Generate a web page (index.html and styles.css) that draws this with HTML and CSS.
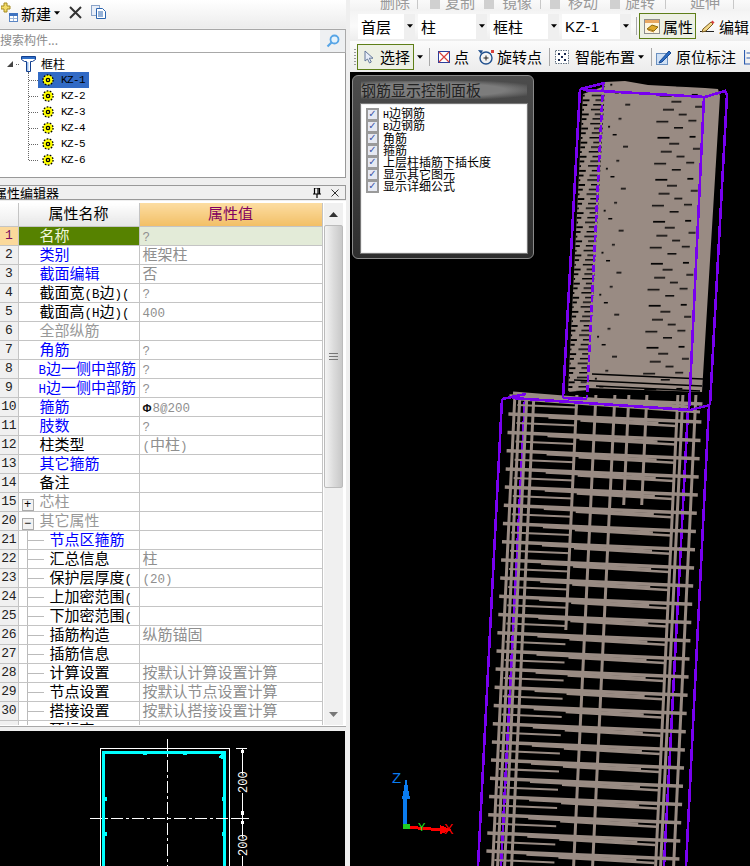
FILE: index.html
```html
<!DOCTYPE html>
<html lang="zh">
<head>
<meta charset="utf-8">
<title>钢筋显示</title>
<link rel="stylesheet" href="styles.css">
</head>
<body>
<svg class="defs" width="0" height="0">
  <symbol id="gear" viewBox="0 0 13 13">
    <g stroke="#000" stroke-width="1.4" stroke-dasharray="1.800 1.600"><circle cx="6.500" cy="6.500" r="5.500" fill="#ffff00"/></g>
    <circle cx="6.500" cy="6.500" r="1.800" fill="#ffff00" stroke="#000" stroke-width="1.400"/>
  </symbol>
  <symbol id="caret" viewBox="0 0 7 4"><path d="M0 0h7L3.500 4z" fill="#000"/></symbol>
</svg>

<aside class="left">
  <div class="tb">
    <svg class="ic-new" width="17" height="21" viewBox="0 0 17 21">
      <path d="M3 1h3v3h3v3H6v3H3V7H0V4h3z" fill="#f3dc6a" stroke="#a58a20"/>
      <rect x="8.500" y="11.500" width="8" height="8" fill="#fff" stroke="#5c86c4"/>
      <rect x="8" y="11" width="9" height="3" fill="#3f73c0"/>
      <path d="M9 16.500h7M12.500 14v5" stroke="#9db6d8"/>
    </svg>
    <span class="tb-label">新建</span>
    <svg class="caret" width="6" height="4"><use href="#caret"/></svg>
    <svg class="ic-x" width="13" height="13" viewBox="0 0 13 13"><path d="M1 1l11 11M12 1L1 12" stroke="#333" stroke-width="2"/></svg>
    <svg class="ic-copy" width="15" height="14" viewBox="0 0 15 14">
      <rect x=".5" y=".5" width="8" height="10" fill="#e8eef8" stroke="#8aa3c8"/>
      <path d="M5.500 3.500h6l3 3v7h-9z" fill="#fff" stroke="#2c65b0"/>
      <path d="M7 7h5M7 9h5M7 11h5" stroke="#2c65b0"/>
    </svg>
  </div>

  <div class="search">
    <div class="search-box">搜索构件...</div>
    <svg class="ic-search" width="14" height="14" viewBox="0 0 14 14">
      <circle cx="8.500" cy="5.500" r="4" fill="#e6f3fc" stroke="#57a5e6" stroke-width="1.800"/>
      <path d="M5.500 8.500L1.500 12.500" stroke="#57a5e6" stroke-width="2.200"/>
    </svg>
  </div>

  <div class="tree">
    <div class="tree-root">
      <svg class="root-arrow" width="6" height="6"><path d="M6 0v6H0z" fill="#444"/></svg>
      <span class="root-dash"></span>
      <svg class="root-ic" width="15" height="16" viewBox="0 0 15 16">
        <path d="M.5.500h14v3l-3 2h-2v10h-4v-10h-2l-3-2z" fill="#fff" stroke="#123f8f"/>
        <path d="M1 1h13v2H1z" fill="#2f6fc8"/>
        <path d="M6 6h1.500v9H6z" fill="#9cc0ee"/>
      </svg>
      <span class="root-label">框柱</span>
    </div>
    <div class="tree-kids">
      <div class="kid"><span class="kid-dash"></span><div class="kid-body kid-sel"><svg class="gear" width="12" height="12"><use href="#gear"/></svg><span class="kz">KZ-1</span></div></div>
      <div class="kid"><span class="kid-dash"></span><div class="kid-body"><svg class="gear" width="12" height="12"><use href="#gear"/></svg><span class="kz">KZ-2</span></div></div>
      <div class="kid"><span class="kid-dash"></span><div class="kid-body"><svg class="gear" width="12" height="12"><use href="#gear"/></svg><span class="kz">KZ-3</span></div></div>
      <div class="kid"><span class="kid-dash"></span><div class="kid-body"><svg class="gear" width="12" height="12"><use href="#gear"/></svg><span class="kz">KZ-4</span></div></div>
      <div class="kid"><span class="kid-dash"></span><div class="kid-body"><svg class="gear" width="12" height="12"><use href="#gear"/></svg><span class="kz">KZ-5</span></div></div>
      <div class="kid kid-last"><span class="kid-dash"></span><div class="kid-body"><svg class="gear" width="12" height="12"><use href="#gear"/></svg><span class="kz">KZ-6</span></div></div>
    </div>
  </div>

  <div class="title">
    <span class="title-text">属性编辑器</span>
    <svg width="8" height="10" viewBox="0 0 8 10"><path d="M1.500 0h5v6h-5zM0 6h8M4 6v4M5 0v6" fill="none" stroke="#000" stroke-width="1.200"/></svg>
    <svg class="title-x" width="8" height="8" viewBox="0 0 8 8"><path d="M.5.500l7 7M7.500.500l-7 7" stroke="#333"/></svg>
  </div>

  <div class="props">
    <div class="table-wrap">
      <table class="grid">
        <colgroup><col class="c0"><col class="c1"><col class="c2"></colgroup>
        <thead><tr><th class="th-num"></th><th class="th-name">属性名称</th><th class="th-val">属性值</th></tr></thead>
        <tbody>
          <tr><td class="num num-on">1</td><td class="name name-on">名称</td><td class="val val-on"><span class="m">?</span></td></tr>
          <tr><td class="num">2</td><td class="name b">类别</td><td class="val">框架柱</td></tr>
          <tr><td class="num">3</td><td class="name b">截面编辑</td><td class="val">否</td></tr>
          <tr><td class="num">4</td><td class="name">截面宽<span class="m">(B</span>边<span class="m">)(</span></td><td class="val"><span class="m">?</span></td></tr>
          <tr><td class="num">5</td><td class="name">截面高<span class="m">(H</span>边<span class="m">)(</span></td><td class="val"><span class="m">400</span></td></tr>
          <tr><td class="num">6</td><td class="name g">全部纵筋</td><td class="val"></td></tr>
          <tr><td class="num">7</td><td class="name b">角筋</td><td class="val"><span class="m">?</span></td></tr>
          <tr><td class="num">8</td><td class="name b tight"><span class="m">B</span>边一侧中部筋</td><td class="val"><span class="m">?</span></td></tr>
          <tr><td class="num">9</td><td class="name b tight"><span class="m">H</span>边一侧中部筋</td><td class="val"><span class="m">?</span></td></tr>
          <tr><td class="num">10</td><td class="name b">箍筋</td><td class="val"><span class="rebar">Φ</span><span class="m">8@200</span></td></tr>
          <tr><td class="num">11</td><td class="name b">肢数</td><td class="val"><span class="m">?</span></td></tr>
          <tr><td class="num">12</td><td class="name">柱类型</td><td class="val"><span class="m">(</span>中柱<span class="m">)</span></td></tr>
          <tr><td class="num">13</td><td class="name b">其它箍筋</td><td class="val"></td></tr>
          <tr><td class="num">14</td><td class="name">备注</td><td class="val"></td></tr>
          <tr><td class="num">15</td><td class="name g"><span class="exp">+</span>芯柱</td><td class="val"></td></tr>
          <tr><td class="num">20</td><td class="name g"><span class="exp">−</span>其它属性</td><td class="val"></td></tr>
          <tr><td class="num">21</td><td class="name child b">节点区箍筋</td><td class="val"></td></tr>
          <tr><td class="num">22</td><td class="name child">汇总信息</td><td class="val">柱</td></tr>
          <tr><td class="num">23</td><td class="name child">保护层厚度<span class="m">(</span></td><td class="val"><span class="m">(20)</span></td></tr>
          <tr><td class="num">24</td><td class="name child">上加密范围<span class="m">(</span></td><td class="val"></td></tr>
          <tr><td class="num">25</td><td class="name child">下加密范围<span class="m">(</span></td><td class="val"></td></tr>
          <tr><td class="num">26</td><td class="name child">插筋构造</td><td class="val">纵筋锚固</td></tr>
          <tr><td class="num">27</td><td class="name child">插筋信息</td><td class="val"></td></tr>
          <tr><td class="num">28</td><td class="name child">计算设置</td><td class="val">按默认计算设置计算</td></tr>
          <tr><td class="num">29</td><td class="name child">节点设置</td><td class="val">按默认节点设置计算</td></tr>
          <tr><td class="num">30</td><td class="name child">搭接设置</td><td class="val">按默认搭接设置计算</td></tr>
          <tr><td class="num"></td><td class="name child">顶标高<span class="m">(m)</span></td><td class="val"><span class="m">?</span></td></tr>
        </tbody>
      </table>
    </div>
    <div class="scroll">
      <div class="sc-btn"><svg width="9" height="5"><path d="M4.500 0L9 5H0z" fill="#333"/></svg></div>
      <div class="sc-thumb"><span class="grip"></span></div>
      <div class="sc-track"></div>
      <div class="sc-btn sc-down"><svg width="9" height="5"><path d="M0 0h9L4.500 5z" fill="#777"/></svg></div>
    </div>
  </div>

  <div class="section">
    <svg class="section-svg" width="345" height="135" viewBox="0 731 345 135" shape-rendering="crispEdges">
      <path d="M100.500 866V748.500h129V866" fill="none" stroke="#fff"/>
      <path d="M103.500 866V752h121v114" fill="none" stroke="#00ffff" stroke-width="3"/>
      <path d="M167.500 739V866M90 818.500H249" stroke="#fff" stroke-dasharray="12 3 3 3" fill="none"/>
      <path d="M242.500 748V866M236 748.500h11M233 818.500h16" stroke="#fff" fill="none"/>
      <path d="M241 750h3v3h-3zM241 811h3v4h-3zM241 821h3v3h-3z" fill="#fff"/>
      <path d="M143 752h3v2h-3zM183 752h3v2h-3zM104 797h2v3h-2zM222 797h2v3h-2zM104 832h2v3h-2zM222 832h2v3h-2z" fill="#00ffff" stroke="#00ffff"/>
      <path d="M219 758l5-5M221 759l4-4" stroke="#00ffff" stroke-width="1.500"/>
      <rect x="236" y="774" width="13" height="19" fill="#000"/>
      <rect x="236" y="837" width="13" height="19" fill="#000"/>
      <text class="dim" transform="translate(247 793) rotate(-90)">200</text>
      <text class="dim" transform="translate(247 856) rotate(-90)">200</text>
    </svg>
  </div>
</aside>

<main class="right">
  <div class="strip">
    <span class="strip-item i1">删除</span><span class="vsep s1"></span>
    <span class="strip-ic i2"></span><span class="strip-item i3">复制</span>
    <span class="strip-ic i4"></span><span class="strip-item i5">镜像</span><span class="vsep s2"></span>
    <span class="strip-ic i6"></span><span class="strip-item i7">移动</span>
    <span class="strip-ic i8"></span><span class="strip-item i9">旋转</span><span class="vsep s3"></span>
    <span class="strip-item i10">延伸</span><span class="vsep s4"></span>
    <span class="strip-item i11">修</span>
  </div>

  <div class="bar bar-2">
    <div class="sel sel-first"><span class="sel-text">首层</span><span class="sel-btn"><svg width="6" height="4"><use href="#caret"/></svg></span></div>
    <div class="sel"><span class="sel-text">柱</span><span class="sel-btn"><svg width="6" height="4"><use href="#caret"/></svg></span></div>
    <div class="sel"><span class="sel-text">框柱</span><span class="sel-btn"><svg width="6" height="4"><use href="#caret"/></svg></span></div>
    <div class="sel"><span class="sel-text sel-kz">KZ-1</span><span class="sel-btn"><svg width="6" height="4"><use href="#caret"/></svg></span></div>
    <span class="bsep"></span>
    <div class="toggle toggle-prop">
      <svg width="16" height="15" viewBox="0 0 16 15">
        <rect x=".5" y=".5" width="15" height="14" fill="#fff6de" stroke="#8d8d8d"/>
        <rect x="1" y="1" width="14" height="3" fill="#e9a862"/>
        <path d="M3 10l5-4 6 2-4 4z" fill="#e0a92a" stroke="#8a6a10"/>
        <path d="M4 11l6 2" stroke="#c0862a"/>
      </svg>
      <span>属性</span>
    </div>
    <svg class="ic-edit" width="16" height="14" viewBox="0 0 16 14">
      <path d="M1 12.500h14" stroke="#222"/>
      <path d="M4 10l8-7 2 2-7 7-4 1z" fill="#f2d98c" stroke="#7a5a20"/>
      <path d="M12 3l1.500-1.500 2 2L14 5z" fill="#d94040"/>
    </svg>
    <span class="bar-text">编辑</span>
  </div>

  <div class="bar bar-3">
    <span class="handle"></span>
    <div class="toggle toggle-sel">
      <svg width="10" height="14" viewBox="0 0 10 14"><path d="M1 1v10l2.500-2 2 4 1.800-1-2-3.800H9z" fill="#e8eef8" stroke="#64789a"/></svg>
      <span>选择</span>
    </div>
    <svg class="c-sel" width="6" height="4"><use href="#caret"/></svg>
    <span class="bsep bs-a"></span>
    <svg class="ic-point" width="12" height="12" viewBox="0 0 12 12"><rect x=".5" y=".5" width="11" height="11" fill="#fff" stroke="#2b3e9c"/><path d="M1 1l10 10M11 1L1 11" stroke="#d8403c" stroke-width="1.200"/></svg>
    <span class="bar-text t-point">点</span>
    <svg class="ic-rot" width="16" height="16" viewBox="0 0 16 16"><circle cx="8" cy="9" r="6" fill="none" stroke="#20508e" stroke-width="1.400"/><path d="M5.500 9h5M8 6.500v5" stroke="#222"/><path d="M0 1l5 .5-2 3.500z" fill="#20508e"/><rect x="13" y="1" width="3" height="3" fill="#d8403c"/></svg>
    <span class="bar-text t-rot">旋转点</span>
    <span class="bsep bs-b"></span>
    <svg class="ic-smart" width="14" height="14" viewBox="0 0 14 14"><rect x=".5" y=".5" width="13" height="13" fill="#fff" stroke="#607080" stroke-dasharray="1.500 1"/><path d="M3 3h2v2H3zM9 3h2v2H9zM3 9h2v2H3zM9 9h2v2H9zM6 6h2v2H6z" fill="#1a2a50"/></svg>
    <span class="bar-text t-smart">智能布置</span>
    <svg class="c-smart" width="6" height="4"><use href="#caret"/></svg>
    <span class="bsep bs-c"></span>
    <svg class="ic-mark" width="16" height="16" viewBox="0 0 16 16"><rect x=".5" y="4.500" width="11" height="11" fill="#cfe0f4" stroke="#6a90c0"/><path d="M4 12L13 2l2 2-9 9-3 1z" fill="#2c6cc4" stroke="#1a4a90"/></svg>
    <span class="bar-text t-mark">原位标注</span>
    <svg class="ic-last" width="6" height="16" viewBox="0 0 6 16"><path d="M.5 1v14H6M2.500 4H6M2.500 9H6" fill="none" stroke="#2c5cb0" stroke-width="1.200"/></svg>
  </div>

  <div class="canvas">
    <svg class="scene" width="400" height="794" viewBox="350 72 400 794">
      <defs>
        <pattern id="dashes" patternUnits="userSpaceOnUse" width="110" height="42" patternTransform="translate(600 90) skewX(-3)">
          <path d="M15 2h4v1.500h-4zM26 14h5v1.500h-5zM20 28h3v1.500h-3zM10 36h2v1.500h-2zM60 5h12v1.500H60zM72 11h10v1.500H72zM64 19h11v1.500H64zM80 24h8v1.500h-8zM58 31h12v1.500H58zM76 37h9v1.500h-9zM92 4h6v1.500h-6zM96 16h7v1.500h-7zM90 30h8v1.500h-8z" fill="#000"/>
        </pattern>
        <pattern id="stubs" patternUnits="userSpaceOnUse" width="22" height="14.100" patternTransform="translate(582 90) skewX(-3)">
          <path d="M0 0h6v1.800H0zM0 4.700h3v1.800H0zM0 9.400h8v1.800H0zM12 0h8v1.500h-8zM10 4.700h10v1.500H10zM14 9.400h6v1.500h-6z" fill="#000"/>
        </pattern>
        <g id="rb" class="rb">
          <path d="M0 0L193 8" stroke-width="3.500"/>
          <path d="M40 3.500L150 9" stroke-width="2.500"/>
          <path d="M72 6.500L168 12" stroke-width="2.500"/>
          <path d="M8 9L68 11.500" stroke-width="2"/>
        </g>
      </defs>

      <g class="pur" shape-rendering="crispEdges">
        <path d="M525 398L501 866M688 410L664 866"/>
      </g>

      <g class="rv">
        <path d="M514.900 395L492.600 866M519.900 395L497.600 866M526.900 395L504.600 866M533.900 395L511.600 866"/>
        <path d="M576.900 395L565.800 630M595.900 395L573.600 866M614.900 395L592.600 866M628.900 395L623.700 505M646.900 395L641.700 505"/>
        <path d="M677.900 395L655.600 866M682.900 395L660.600 866M695.900 395L673.600 866"/>
      </g>
      <path class="rtop" d="M513 393L690 407M520 399L700 412"/>
      <use href="#rb" x="509.400" y="396"/><use href="#rb" x="508.400" y="414"/><use href="#rb" x="507.500" y="432.500"/>
      <use href="#rb" x="506.600" y="450.700"/><use href="#rb" x="505.700" y="469"/><use href="#rb" x="504.800" y="487"/>
      <use href="#rb" x="503.800" y="505.300"/><use href="#rb" x="502.900" y="523.500"/><use href="#rb" x="502" y="541.700"/>
      <use href="#rb" x="501.100" y="560"/><use href="#rb" x="500.200" y="578"/><use href="#rb" x="499.200" y="596.300"/>
      <use href="#rb" x="498.300" y="614.500"/><use href="#rb" x="497.400" y="632.700"/><use href="#rb" x="496.500" y="651"/>
      <use href="#rb" x="495.600" y="669"/><use href="#rb" x="494.600" y="687.300"/><use href="#rb" x="493.700" y="705.500"/>
      <use href="#rb" x="492.800" y="723.700"/><use href="#rb" x="491.900" y="742"/><use href="#rb" x="491" y="760"/>
      <use href="#rb" x="490" y="778.300"/><use href="#rb" x="489.100" y="796.500"/><use href="#rb" x="488.200" y="814.700"/>
      <use href="#rb" x="487.300" y="833"/><use href="#rb" x="486.400" y="851"/><use href="#rb" x="485.400" y="869.300"/>

      <path class="concrete" d="M605 82L625 81L648 85L705 88L718 89L720 96L702 392L586 388L603 90z"/>
      <path class="concrete" d="M583 94L605 86L588 390L568 392z"/>
      <path d="M605 82L625 81L648 85L705 88L718 89L720 96L702 392L586 388L603 90z" fill="url(#dashes)"/>
      <path d="M583 94L605 86L588 390L568 392z" fill="url(#stubs)"/>
      <path class="gaps" d="M592 374L703 379M574 380L702 386M596 386L700 391"/>

      <g class="pur" shape-rendering="crispEdges">
        <path d="M502 399L478 866M709 405L686 866"/>
        <path d="M502 399L526 394M512 398L690 410L710 405"/>
        <path d="M580 89L563 398M727 95L710 405"/>
        <path d="M580 89L605 83M583 90L705 97L725 91L727 95"/>
        <path class="pur-dash" d="M603 85L587 398"/>
        <path d="M704 97L689 410"/>
        <path d="M563 398L587 399"/>
      </g>

      <g shape-rendering="crispEdges">
        <path d="M405 827V797" stroke="#0a7cf0" stroke-width="3.500" fill="none"/>
        <path d="M406 777L410 799H402z" fill="#0a7cf0"/>
        <path d="M404 827L445 830" stroke="#ff0000" stroke-width="3" fill="none"/>
        <path d="M440 825L452 830L440 834z" fill="#ff0000"/>
        <path d="M403 824h7v5h-7z" fill="#22cc22"/>
      </g>
      <text class="ax ax-z" x="392" y="783">Z</text>
      <text class="ax ax-y" x="418" y="831">Y</text>
      <text class="ax ax-x" x="444" y="834">X</text>
    </svg>

    <section class="panel">
      <h2 class="panel-title">钢筋显示控制面板</h2>
      <ul class="panel-list">
        <li class="chk"><span class="box">✓</span><span class="lab"><span class="lm">H</span>边钢筋</span></li>
        <li class="chk"><span class="box">✓</span><span class="lab"><span class="lm">B</span>边钢筋</span></li>
        <li class="chk"><span class="box">✓</span><span class="lab">角筋</span></li>
        <li class="chk"><span class="box">✓</span><span class="lab">箍筋</span></li>
        <li class="chk"><span class="box">✓</span><span class="lab">上层柱插筋下插长度</span></li>
        <li class="chk"><span class="box">✓</span><span class="lab">显示其它图元</span></li>
        <li class="chk"><span class="box">✓</span><span class="lab">显示详细公式</span></li>
      </ul>
    </section>
  </div>
</main>
</body>
</html>
```

FILE: styles.css
```css
* { box-sizing: border-box; }
html, body { margin: 0; padding: 0; }
body {
  width: 750px; height: 866px; overflow: hidden;
  display: flex; gap: 4px;
  background: #efefef;
  font: 15px/1 "Noto Sans CJK SC", "Liberation Sans", sans-serif;
  color: #000;
}
svg { display: block; flex: none; }
.defs { position: absolute; }

/* left */
.left { width: 346px; height: 866px; display: flex; flex-direction: column; }
.tb {
  height: 28px; display: flex; align-items: center; padding-left: 1px; flex: none;
  background: linear-gradient(#ffffff, #ececec);
}
.ic-new { margin-top: -4px; }
.tb-label { margin-left: 3px; margin-top: -2px; }
.tb .caret { margin-left: 3px; margin-top: -2px; }
.ic-x { margin-left: 9px; margin-top: -4px; }
.ic-copy { margin-left: 9px; margin-top: -4px; }

.search {
  height: 24px; margin-top: 1px; flex: none;
  display: flex; align-items: center;
  background: #eef0f2; border-top: 1px solid #a8a8a8; border-bottom: 1px solid #a8a8a8; border-right: 1px solid #aaa;
}
.search-box {
  width: 320px; height: 100%; padding-bottom: 3px; background: #fff; color: #8c8c8c;
  display: flex; align-items: center; font-size: 12px;
}
.ic-search { margin-left: 6px; }

.tree {
  height: 125px; flex: none; background: #fff;
  border-right: 1px solid #999; border-bottom: 1px solid #999;
}
.tree-root { height: 19px; padding: 3px 0 0 7px; display: flex; align-items: center; }
.root-dash { width: 3px; height: 0; margin: 0 2px 0 3px; border-bottom: 1px dotted #666; }
.root-ic { margin-top: -1px; }
.root-label { margin-left: 5px; font-size: 12px; }
.tree-kids {
  margin-left: 28px; height: 88px; border-left: 1px dotted #666;
}
.kid { height: 16px; display: flex; align-items: center; }
.kid-dash { width: 9px; border-bottom: 1px dotted #666; flex: none; }
.kid-body { width: 51px; height: 16px; display: flex; align-items: center; padding-left: 4px; }
.kid-sel { background: #316ac5; }
.kz { margin-left: 7px; font: 11px/1 "Liberation Mono", monospace; letter-spacing: -.6px; }

.title {
  height: 15px; margin-top: 7px; flex: none;
  display: flex; align-items: center;
  background: #f0f0f0; border: 1px solid #999; border-left: 0; padding-right: 6px; overflow: hidden;
}
.title-text { margin-left: -6px; flex: 1; white-space: nowrap; font-size: 13px; }
.title-x { margin-left: 10px; }

.props {
  height: 526px; margin-top: 1px; flex: none; display: flex;
  background: #fff; border-bottom: 1px solid #a8a8a8; padding-top: 2px;
}
.table-wrap { width: 323px; height: 522px; overflow: hidden; flex: none; }
.grid { width: 322px; table-layout: fixed; border-collapse: collapse; }
.c0 { width: 18px; } .c1 { width: 121px; } .c2 { width: 183px; }
.grid th, .grid td {
  border: 1px solid #c4c4c4; padding: 0; height: 19px; line-height: 16px;
  vertical-align: top; white-space: nowrap; overflow: hidden; font-weight: 400;
}
.grid thead th { height: 23px; line-height: 20px; border-top: 0; text-align: center; }
.th-num { border-left: 0 !important; background: linear-gradient(#fff, #ececec); }
.th-name { background: linear-gradient(#fff, #e6e6e6); }
.th-val { background: linear-gradient(#fcdda2, #f2bf66); color: #800060; }
.grid .num {
  border-left: 0; background: #f0f0f0; text-align: center;
  font: 13px/17px "Liberation Mono", monospace;
  letter-spacing: -.2px; color: #222;
}
.grid .num-on { background: #fbd99b; color: #7d0f5e; }
.name { padding-left: 21px !important; }
.name.tight { padding-left: 20px !important; }
.name.b { color: #0000ff; }
.name.g { color: #999; }
.name-on { background: #568200; color: #f0f6dc; }
.val { padding-left: 3px !important; color: #8f8f8f; }
.val-on { background: #e3ebd8; }
.m { font: 12.5px/0 "Liberation Mono", monospace; }
.rebar { font: 700 11px/0 "Liberation Sans", sans-serif; color: #111; margin-right: 1px; }
.exp {
  display: inline-block; width: 12px; height: 12px; margin: 0 6px 0 -18px;
  border: 1px solid #aaa; background: #f2f2f2; color: #000;
  font: 12px/10px "Liberation Mono", monospace; text-align: center; vertical-align: -1px;
}
.name.child {
  padding-left: 31px !important;
  background:
    linear-gradient(#bbb, #bbb) 8px 0 / 1px 100% no-repeat,
    linear-gradient(#bbb, #bbb) 9px 9px / 16px 1px no-repeat;
}
.scroll {
  width: 19px; margin-left: 1px; height: 522px;
  display: flex; flex-direction: column; background: #f0f0f0;
}
.sc-btn { height: 22px; display: flex; align-items: center; justify-content: center; flex: none; }
.sc-thumb {
  height: 263px; flex: none; display: flex; align-items: center; justify-content: center;
  background: linear-gradient(90deg, #f4f4f4, #dcdcdc 50%, #c8c8c8);
  border: 1px solid #bbb; border-radius: 2px;
}
.grip { width: 9px; height: 7px; border-top: 1px solid #777; border-bottom: 1px solid #777; background: linear-gradient(#777, #777) 0 2px / 100% 1px no-repeat; }
.sc-track { flex: 1; }
.section { margin-top: 4px; height: 135px; width: 345px; background: #000; flex: none; }
.dim { font: 12px "Liberation Mono", monospace; fill: #fff; }

/* right */
.right { width: 400px; height: 866px; display: flex; flex-direction: column; }
.strip {
  height: 11px; flex: none; display: flex; align-items: flex-end;
  background: linear-gradient(#fafafa, #f2f2f2); padding-bottom: 2px; overflow: hidden;
}
.strip-item { color: #9a9a9a; flex: none; line-height: 15px; height: 15px; width: 30px; }
.strip-ic { width: 10px; height: 9px; background: #d0d0d0; flex: none; }
.vsep { width: 1px; height: 10px; background: #c8c8c8; flex: none; }
.i1 { margin-left: 30px; }
.s1 { margin-left: 7px; }
.i2 { margin-left: 12px; }
.i3 { margin-left: 5px; }
.i4 { margin-left: 9px; }
.i5 { margin-left: 8px; }
.s2 { margin-left: 8px; }
.i6 { margin-left: 9px; }
.i7 { margin-left: 8px; }
.i8 { margin-left: 12px; }
.i9 { margin-left: 5px; }
.s3 { margin-left: 10px; }
.i10 { margin-left: 24px; }
.s4 { margin-left: 13px; }
.i11 { margin-left: 16px; }

.bar { display: flex; align-items: center; flex: none; }
.bar-2 { height: 30px; padding-left: 8px; background: linear-gradient(#f4f4f4, #fafafa 50%, #ededed); }
.bar-3 { height: 31px; background: linear-gradient(#fbfbfb, #ececec); }
.sel { width: 69px; height: 25px; margin-right: 3px; display: flex; flex: none; background: #fff; }
.sel-first { width: 57px; }
.sel-text { flex: 1; padding-left: 3px; display: flex; align-items: center; }
.sel-kz { font: 15px/1 "Liberation Sans", sans-serif; letter-spacing: .5px; }
.sel-btn { width: 11px; background: #efefef; display: flex; align-items: center; justify-content: center; }
.bsep { width: 1px; height: 18px; background: #a9a9a9; flex: none; margin-left: 2px; }
.toggle {
  display: flex; align-items: center; flex: none; height: 26px; width: 57px;
  background: #edf0e4; border: 1px solid #5e7f18;
}
.toggle-prop { margin-left: 2px; padding-left: 4px; gap: 3px; }
.toggle-sel { margin-left: 1px; padding-left: 6px; gap: 6px; }
.ic-edit { margin-left: 3px; }
.bar-text { flex: none; margin-left: 4px; }
.handle { width: 2px; height: 16px; margin-left: 4px; flex: none; background: repeating-linear-gradient(#999 0 1px, transparent 1px 3px); }
.c-sel { margin-left: 3px; }
.bs-a { margin-left: 6px; }
.ic-point { margin-left: 8px; }
.t-point { margin-left: 4px; }
.ic-rot { margin-left: 9px; }
.t-rot { margin-left: 3px; }
.bs-b { margin-left: 7px; }
.ic-smart { margin-left: 5px; }
.t-smart { margin-left: 6px; }
.c-smart { margin-left: 3px; }
.bs-c { margin-left: 7px; }
.ic-mark { margin-left: 4px; }
.t-mark { margin-left: 4px; }
.ic-last { margin-left: 8px; }

.canvas { position: relative; height: 794px; background: #000; overflow: hidden; flex: none; }
.scene { shape-rendering: geometricPrecision; }
.pur path { fill: none; stroke: #7800f0; stroke-width: 2.6; }
.pur .pur-dash { stroke-dasharray: 7 3; }
.rv path, .rtop { fill: none; stroke: #998b83; stroke-width: 3; }
.rtop { stroke-width: 3; }
.rb path { fill: none; stroke: #998b83; }
.concrete { fill: #998b83; }
.gaps { fill: none; stroke: #000; stroke-width: 1.5; }
.ax { font: 14px "Liberation Sans", sans-serif; }
.ax-z { fill: #0a7cf0; font-size: 15px; }
.ax-y { fill: #22ee22; font-size: 11px; }
.ax-x { fill: #ff0000; }

.panel {
  position: absolute; left: 2px; top: 3px; width: 182px; height: 184px;
  padding: 5px 6px 5px 8px;
  background: linear-gradient(#4c4c4c, #2e2e2e);
  border: 1px solid #8a8a8a; border-radius: 6px;
}
.panel-title {
  margin: 0 0 5px; height: 18px; font-size: 15px; font-weight: 400; line-height: 18px; color: #222;
  background: radial-gradient(ellipse at 40% 50%, #7c7c7c 55%, transparent 85%);
}
.panel-list {
  list-style: none; margin: 0; padding: 3px 0 0 4px; height: 149px;
  background: #fff; border: 1px solid #eee; outline: 1px solid #777;
}
.chk { height: 12px; display: flex; align-items: center; }
.box {
  width: 13px; height: 13px; flex: none; display: flex; align-items: center; justify-content: center;
  background: #e6e9f2; border: 2px solid #9a9a9a; color: #3a55a8;
  font: 700 10px/1 "DejaVu Sans", sans-serif;
}
.lab { margin-left: 4px; font-size: 12px; line-height: 12px; white-space: nowrap; }
.lm { font: 10px/1 "Liberation Mono", monospace; }
```
